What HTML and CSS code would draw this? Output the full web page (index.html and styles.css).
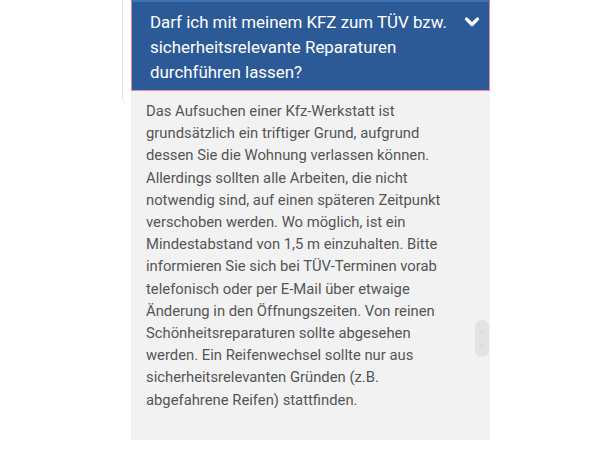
FILE: index.html
```html
<!DOCTYPE html>
<html lang="de">
<head>
    <meta charset="UTF-8">
    <meta name="viewport" content="width=device-width, initial-scale=1.0">
    <title>FAQ</title>
    <link rel="stylesheet" href="styles.css">
</head>
<body>
    <div class="page">
        <div class="curl"></div>
        <div class="faq-item">
            <div class="faq-question">
                <span>Darf ich mit meinem KFZ zum TÜV bzw. sicherheitsrelevante Reparaturen durchführen lassen?</span>
                <svg class="chevron" width="16" height="12" viewBox="0 0 16 12">
                    <path d="M2.5 3 L8 8.5 L13.5 3" fill="none" stroke="#fff" stroke-width="3.2" stroke-linecap="round" stroke-linejoin="round"/>
                </svg>
            </div>
            <div class="faq-answer">
                <p>Das Aufsuchen einer Kfz-Werkstatt ist grundsätzlich ein triftiger Grund, aufgrund dessen Sie die Wohnung verlassen können. Allerdings sollten alle Arbeiten, die nicht notwendig sind, auf einen späteren Zeitpunkt verschoben werden. Wo möglich, ist ein Mindestabstand von 1,5 m einzuhalten. Bitte informieren Sie sich bei TÜV-Terminen vorab telefonisch oder per E-Mail über etwaige Änderung in den Öffnungszeiten. Von reinen Schönheitsreparaturen sollte abgesehen werden. Ein Reifenwechsel sollte nur aus sicherheitsrelevanten Gründen (z.B. abgefahrene Reifen) stattfinden.</p>
                <div class="scroll-thumb">
                    <svg width="8" height="26" viewBox="0 0 8 26">
                        <path d="M1.5 8 L4 5.5 L6.5 8 M1.5 18 L4 20.5 L6.5 18" fill="none" stroke="#d4d4d4" stroke-width="1"/>
                    </svg>
                </div>
            </div>
        </div>
    </div>
</body>
</html>
```

FILE: styles.css
```css
* {
    margin: 0;
    padding: 0;
    box-sizing: border-box;
}

body {
    background: #fff;
    font-family: Roboto, 'Liberation Sans', sans-serif;
}

.page {
    position: relative;
    padding-left: 131px;
}

.curl {
    position: absolute;
    left: 122px;
    top: 0;
    width: 6px;
    height: 104px;
    border-left: 1px solid #e2e2e2;
    border-bottom-left-radius: 6px;
}

.faq-item {
    width: 359px;
}

.faq-question {
    display: flex;
    justify-content: space-between;
    align-items: flex-start;
    background: #2c5a96;
    color: #fff;
    border: 1px solid #e58aa6;
    border-top: 2px solid #3a73b8;
    padding: 8px 9px 7px 18px;
    font-size: 16.9px;
    line-height: 25px;
    height: 91px;
}

.faq-question span {
    width: 310px;
}

.chevron {
    margin-top: 6px;
    flex-shrink: 0;
}

.faq-answer {
    position: relative;
    background: #f2f2f2;
    padding: 9px 40px 30px 15px;
    height: 349px;
}

.faq-answer p {
    width: 305px;
    color: #555;
    font-size: 14.8px;
    line-height: 22.2px;
}

.scroll-thumb {
    position: absolute;
    right: 1px;
    top: 229px;
    width: 14px;
    height: 37px;
    border-radius: 7px;
    background: #e3e3e3;
    display: flex;
    align-items: center;
    justify-content: center;
}
```
